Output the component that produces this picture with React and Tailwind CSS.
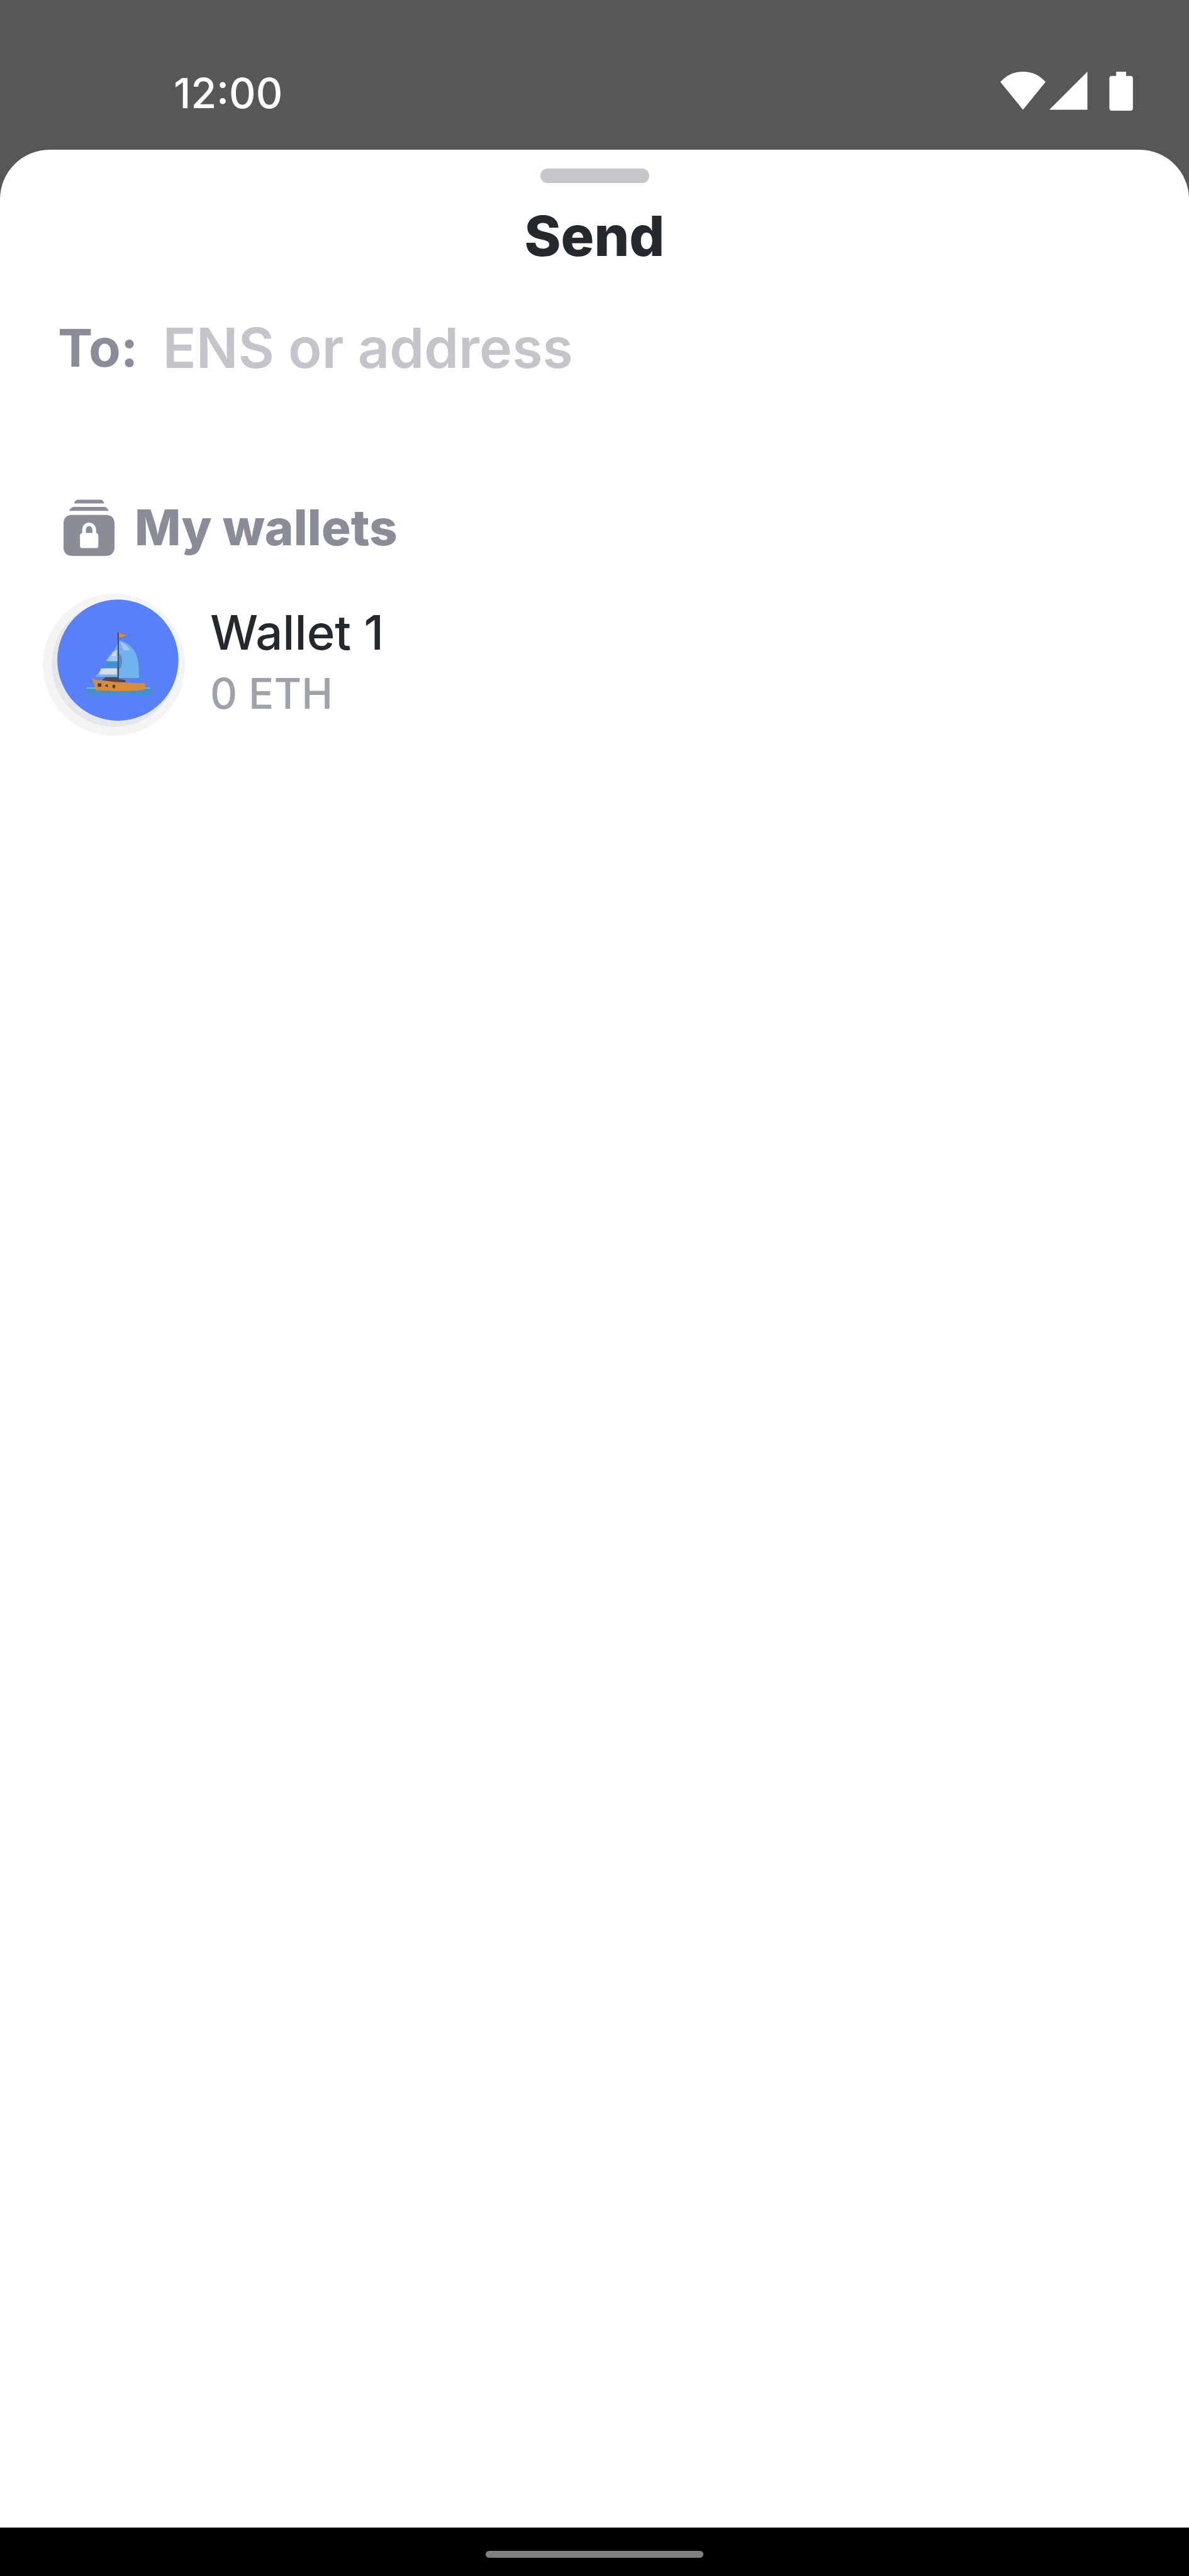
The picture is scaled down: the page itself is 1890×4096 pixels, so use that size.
import { useState } from 'react';

const wallets = [{ id: 1, name: 'Wallet 1', balance: '0 ETH' }];

function StatusBar() {
    return (
        <header className="flex h-[238px] items-start justify-between pt-[112px] pr-[89px] pl-[276px] text-white">
            <time className="text-[66px] leading-[72px] font-medium">12:00</time>
            <svg className="h-[64px] w-[212px]" viewBox="0 0 215 65" fill="currentColor" aria-hidden="true">
                <path d="M1 18.500C11 7.500 23 2 37.500 2S64 7.500 74 18.500L37.500 63.500Z" />
                <path d="M80 63.500 141.500 2V63.500Z" />
                <path d="M188 2h16v7h7a4 4 0 0 1 4 4v48a4 4 0 0 1-4 4h-30a4 4 0 0 1-4-4V13a4 4 0 0 1 4-4h7Z" />
            </svg>
        </header>
    );
}

function VaultIcon() {
    return (
        <svg className="h-[90px] w-[81px] shrink-0" viewBox="0 0 82 91" fill="currentColor" aria-hidden="true">
            <path d="M17 6.500C18 2.500 20.500.500 24 .500h35c3.500 0 5 2 6.500 6Z" />
            <path d="M9 18.500C11.500 13.500 14 12 17 12h48c3.500 0 6 2.500 8 6.500Z" />
            <path
                fillRule="evenodd"
                d="M14 25h54c9 0 14 5 14 14v38c0 9-5 14-14 14H14C5 91 0 86 0 77V39c0-9 5-14 14-14Zm16 29c-2.500.500-3.500 2-3.500 4v16.500c0 2.500 1.500 4 4 4H52c2.500 0 4-1.500 4-4V58c0-2-1-3.500-3.500-4v-4c0-7.500-5-12.500-11.500-12.500S30 42.500 30 50Zm6 0v-4.500c0-4 2-6.500 5.200-6.500s5.200 2.500 5.200 6.500V54Z"
            />
        </svg>
    );
}

function SailboatAvatar() {
    return (
        <svg className="size-[226px] shrink-0" viewBox="0 0 230 230" aria-hidden="true">
            <circle cx="115" cy="115" r="115" fill="#f4f4f5" />
            <circle cx="116" cy="114" r="101.500" fill="#e5e7ea" />
            <circle cx="121.500" cy="107.500" r="98" fill="#5980f8" />
            <g transform="translate(51 41) scale(.3333)">
                <path fill="#4690d2" d="M52 331h324v40H52Z" />
                <path fill="#72b2ee" d="M60 332h46v6H60ZM344 332h24v6h-24Z" />
                <path fill="#72b2ee" d="M211 120v161H102C141 236 178 186 211 120Z" />
                <path fill="#a3c7f0" d="M211 145v60h-58l34-46Z" />
                <path fill="#d8dfea" d="M202 154v25h-25Z" />
                <path fill="#4690d2" d="M152 205h59v33h-80Z" />
                <path fill="#dadce2" d="M129 240h77v29h-86Z" />
                <path fill="#4690d2" d="m217 280 103 4v11H217ZM304 170c12 31 17 65 18 122h-14Z" />
                <path fill="#72b2ee" d="M217 104c34 8 59 27 77 55 16 29 20 68 20 127h-97Z" />
                <path fill="#a3c7f0" d="M222 112c22 6 38 20 48 40h-30Z" />
                <path fill="#4690d2" d="M217 166c10 7 15 20 15 38s-5 34-15 42Z" />
                <path fill="#56444b" d="M210 65h6v230h-6Z" />
                <path fill="#dc8c35" d="m217 67 26 9 15 3-14 4-10 5h-17Z" />
                <path fill="#56444b" d="M152 282h55l12 10 29 4v11h-65l-49-11Z" />
                <path fill="#d98c38" d="m84 286 24 10 46 5 50 5 56 3 84 3v28l-42 8-86 2-112-4-6-27Z" />
                <path fill="#4b3d45" d="M114 312h17v17h-17ZM148 322l14-7v18ZM192 316l9 11-9 11-9-11Z" />
            </g>
        </svg>
    );
}

export default function App() {
    const [recipient, setRecipient] = useState('');

    return (
        <div className="flex min-h-screen flex-col bg-[#575759] font-['Inter',sans-serif]">
            <StatusBar />

            <main className="flex grow flex-col rounded-t-[79px] bg-white pt-[30px]">
                <div className="h-[23px] w-[173px] self-center rounded-full bg-[#c4c6cb]" />
                <h1 className="mt-[36px] text-center text-[88px] leading-[96px] font-extrabold text-[#25292e]">Send</h1>

                <div className="mt-[82px] flex items-center gap-[39px] px-[92px] leading-[96px]">
                    <label htmlFor="recipient" className="text-[83px] font-bold text-[#8a8d97]">To:</label>
                    <input
                        id="recipient"
                        type="text"
                        value={recipient}
                        onChange={(e) => setRecipient(e.target.value)}
                        placeholder="ENS or address"
                        className="h-[96px] min-w-0 grow text-[88px] font-semibold text-[#25292e] outline-none placeholder:text-[#c4c5ca]"
                    />
                </div>

                <section>
                    <h2 className="mt-[193px] flex items-center gap-[32px] px-[101px] text-[78px] leading-[80px] font-extrabold text-[#8a8d97]">
                        <VaultIcon />
                        My wallets
                    </h2>
                    <ul className="mt-[60px]">
                        {wallets.map((wallet) => (
                            <li key={wallet.id}>
                                <button
                                    type="button"
                                    onClick={() => setRecipient(wallet.name)}
                                    className="flex w-full items-start gap-[40px] px-[68px] text-left"
                                >
                                    <SailboatAvatar />
                                    <span className="flex flex-col pt-[12px] leading-[98px]">
                                        <span className="text-[76px] font-medium text-[#25292e]">{wallet.name}</span>
                                        <span className="text-[67px] font-medium text-[#9fa2a8]">{wallet.balance}</span>
                                    </span>
                                </button>
                            </li>
                        ))}
                    </ul>
                </section>
            </main>

            <footer className="flex h-[77px] items-center justify-center bg-black pt-[8px]">
                <div className="h-[11px] w-[346px] rounded-full bg-[#808080]" />
            </footer>
        </div>
    );
}
